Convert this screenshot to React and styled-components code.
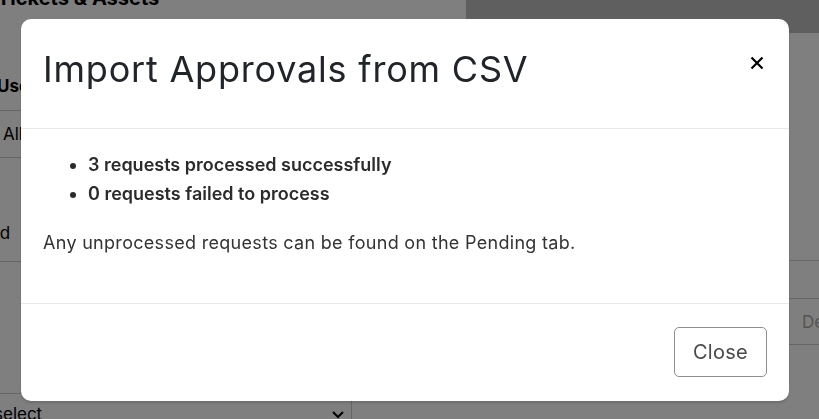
import React from 'react'
import styled, { createGlobalStyle } from 'styled-components'

const GlobalStyle = createGlobalStyle`
  html, body {
    margin: 0;
    padding: 0;
    background: #ffffff;
    font-family: "Inter", "Liberation Sans", sans-serif;
    overflow: hidden;
  }
`;

const Page = styled.div`
  display: grid;
  grid-template-columns: 352px 1fr;
  width: 819px;
  height: 419px;
  overflow: hidden;
  color: #000;
`;

const LeftCol = styled.div`
  display: flex;
  flex-direction: column;
`;

const RightCol = styled.div`
  display: flex;
  flex-direction: column;
  padding-left: 114px;
`;

const PageTitle = styled.h2`
  margin: -14px 0 0 -3px;
  height: 76px;
  font-size: 20px;
  font-weight: 700;
  white-space: nowrap;
`;

const FieldLabel = styled.div`
  height: 48px;
  display: flex;
  align-items: center;
  margin-left: -3px;
  font-size: 17px;
  font-weight: 700;
  border-bottom: 1px solid #cccccc;
`;

const Row = styled.div`
  height: ${p => p.$h}px;
  display: flex;
  align-items: ${p => p.$align || 'center'};
  justify-content: space-between;
  padding: 0 ${p => p.$pad || 0}px 0 ${p => p.$indent || 0}px;
  font-size: 17px;
  color: ${p => p.$muted ? '#a8a8a8' : '#000'};
  border-bottom: ${p => p.$line ? '1px solid #cccccc' : 'none'};
  border-right: ${p => p.$divider ? '1px solid #cccccc' : 'none'};
  white-space: nowrap;
  box-sizing: border-box;
`;

const TopTab = styled.div`
  height: 33px;
  background: #bebebe;
  margin-right: -10px;
`;

const Chevron = styled.svg`
  width: 14px;
  height: 14px;
  margin-top: 14px;
`;

const Backdrop = styled.div`
  position: fixed;
  inset: 0;
  background: rgba(0, 0, 0, 0.5);
`;

const Modal = styled.div`
  position: fixed;
  left: 21px;
  top: 19px;
  width: 768px;
  background: #ffffff;
  border-radius: 10px;
  box-shadow: 0 2px 3px rgba(0, 0, 0, 0.15);
  display: flex;
  flex-direction: column;
  color: #212529;
`;

const Header = styled.div`
  height: 110px;
  display: flex;
  align-items: center;
  justify-content: space-between;
  padding: 0 24px 10px 22px;
  box-sizing: border-box;
  border-bottom: 1px solid #e9e9e9;
`;

const Title = styled.h1`
  margin: 0;
  font-size: 36px;
  font-weight: 400;
  letter-spacing: 0.8px;
  color: #212529;
`;

const CloseX = styled.button`
  border: none;
  background: none;
  padding: 0;
  margin-bottom: 12px;
  width: 16px;
  height: 16px;
  display: flex;
  align-items: center;
  justify-content: center;
  cursor: pointer;
`;

const Body = styled.div`
  height: 175px;
  padding: 21px 22px 0;
  box-sizing: border-box;
  border-bottom: 1px solid #e9e9e9;
  font-size: 18px;
  color: #333333;
`;

const List = styled.ul`
  margin: 0 0 23px;
  padding-left: 45px;
  li {
    line-height: 29px;
    font-weight: 600;
    color: #2b2b2b;
  }
`;

const Note = styled.p`
  margin: 0;
  line-height: 24px;
  letter-spacing: 0.3px;
`;

const Footer = styled.div`
  height: 97px;
  display: flex;
  align-items: center;
  justify-content: flex-end;
  padding: 0 22px 1px;
  box-sizing: border-box;
`;

const Button = styled.button`
  width: 93px;
  height: 50px;
  border: 1px solid #8a8f94;
  border-radius: 5px;
  background: #ffffff;
  color: #4a4a4a;
  font-family: inherit;
  font-size: 20px;
  letter-spacing: 0.3px;
  cursor: pointer;
`;

const App = () => (
  <>
    <GlobalStyle />
    <Page>
      <LeftCol>
        <PageTitle>Tickets &amp; Assets</PageTitle>
        <FieldLabel>User</FieldLabel>
        <Row $h={47} $line $indent={3}>All</Row>
        <Row $h={104} $line $align="flex-end">
          <span style={{ marginBottom: 18, marginLeft: -68 }}>Approved</span>
        </Row>
        <Row $h={132} $line />
        <Row $h={48} $align="flex-start" $pad={6} $divider>
          <span style={{ marginTop: 10, marginLeft: -6 }}>select</span>
          <Chevron viewBox="0 0 14 14">
            <path d="M2 4l5 5 5-5" fill="none" stroke="#000" strokeWidth="2" />
          </Chevron>
        </Row>
      </LeftCol>
      <RightCol>
        <TopTab />
        <Row $h={228} $line />
        <Row $h={38} $line />
        <Row $h={46} $line $muted $indent={336}>Description</Row>
      </RightCol>
    </Page>
    <Backdrop />
    <Modal>
      <Header>
        <Title>Import Approvals from CSV</Title>
        <CloseX aria-label="Close">
          <svg width="14" height="14" viewBox="0 0 14 14">
            <path d="M1.5 1.5l11 11M12.5 1.5l-11 11" stroke="#000" strokeWidth="2.2" />
          </svg>
        </CloseX>
      </Header>
      <Body>
        <List>
          <li>3 requests processed successfully</li>
          <li>0 requests failed to process</li>
        </List>
        <Note>Any unprocessed requests can be found on the Pending tab.</Note>
      </Body>
      <Footer>
        <Button>Close</Button>
      </Footer>
    </Modal>
  </>
)

export default App
